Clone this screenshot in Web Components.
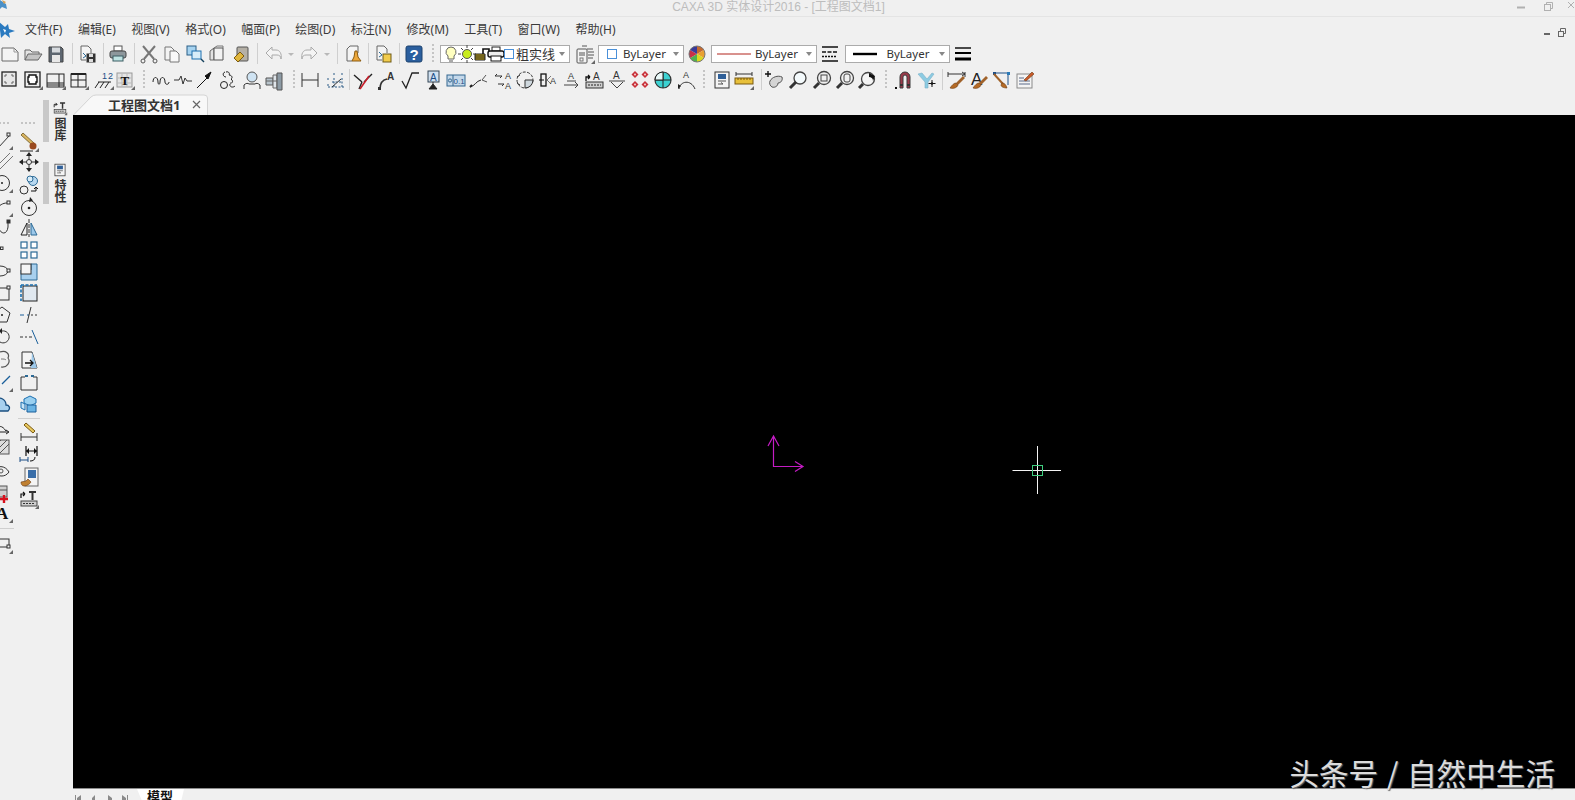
<!DOCTYPE html>
<html lang="zh">
<head>
<meta charset="utf-8">
<title>CAXA 3D 实体设计2016</title>
<style>
  html, body { margin: 0; height: 100%; overflow: hidden; background: #f0f0f0; }
  .lt { font-size: 13px; }
</style>
</head>
<body>
<cad-app>
  <title-bar>CAXA 3D 实体设计2016 - [工程图文档1]</title-bar>
  <menu-bar>
    <menu-item>文件(F)</menu-item><menu-item>编辑(E)</menu-item><menu-item>视图(V)</menu-item>
    <menu-item>格式(O)</menu-item><menu-item>幅面(P)</menu-item><menu-item>绘图(D)</menu-item>
    <menu-item>标注(N)</menu-item><menu-item>修改(M)</menu-item><menu-item>工具(T)</menu-item>
    <menu-item>窗口(W)</menu-item><menu-item>帮助(H)</menu-item>
  </menu-bar>

  <tool-row style="height:25px">
    <tool-icon name="new" at="10"></tool-icon><tool-icon name="open" at="33"></tool-icon><tool-icon name="save" at="56"></tool-icon>
    <tool-sep at="72"></tool-sep>
    <tool-icon name="saveas" at="87"></tool-icon>
    <tool-sep at="103"></tool-sep>
    <tool-icon name="print" at="118"></tool-icon>
    <tool-sep at="134"></tool-sep>
    <tool-icon name="cut" at="149"></tool-icon><tool-icon name="copy" at="172"></tool-icon><tool-icon name="copyblue" at="195"></tool-icon>
    <tool-icon name="cyl" at="217"></tool-icon><tool-icon name="cylpen" at="241"></tool-icon>
    <tool-sep at="257"></tool-sep>
    <tool-icon name="undo" at="274"></tool-icon><tool-icon name="drop" at="291"></tool-icon><tool-icon name="redo" at="309"></tool-icon><tool-icon name="drop" at="327"></tool-icon>
    <tool-sep at="337"></tool-sep>
    <tool-icon name="cone" at="353"></tool-icon>
    <tool-sep at="368"></tool-sep>
    <tool-icon name="pagebox" at="383"></tool-icon>
    <tool-sep at="399"></tool-sep>
    <tool-icon name="help" at="414"></tool-icon>
    <tool-grip at="433"></tool-grip>
    <line-combo w="130" at="505">
      <tool-icon name="bulb" at="10"></tool-icon><tool-icon name="sun" at="26"></tool-icon><tool-icon name="lock" at="41"></tool-icon>
      <tool-icon name="printsm" at="55"></tool-icon><tool-icon name="square" at="68"></tool-icon>
      <span class="lt" w="40" at="95">粗实线</span>
    </line-combo>
    <tool-icon name="layers" at="585"></tool-icon>
    <line-combo w="86" at="641">
      <tool-icon name="square" at="13"></tool-icon><span w="42" at="45">ByLayer</span>
    </line-combo>
    <tool-icon name="wheel" at="697"></tool-icon>
    <line-combo w="106" at="764">
      <tool-icon name="redline" at="22" w="34"></tool-icon><span w="42" at="64">ByLayer</span>
    </line-combo>
    <tool-icon name="dashes" at="831"></tool-icon>
    <line-combo w="105" at="897">
      <tool-icon name="blackline" at="19" w="24"></tool-icon><span w="42" at="62">ByLayer</span>
    </line-combo>
    <tool-icon name="weights" at="963"></tool-icon>
  </tool-row>

  <tool-row style="height:27px">
    <tool-icon name="frame" at="10"></tool-icon><tool-icon name="frame2" at="33"></tool-icon><tool-icon name="titleblk" at="56"></tool-icon>
    <tool-icon name="table" at="79"></tool-icon><tool-icon name="nums" at="104"></tool-icon><tool-icon name="tabletext" at="125"></tool-icon>
    <tool-grip at="144"></tool-grip>
    <tool-icon name="wave" at="161"></tool-icon><tool-icon name="pulse" at="183"></tool-icon><tool-icon name="leader" at="205"></tool-icon>
    <tool-icon name="cloud" at="228"></tool-icon><tool-icon name="person" at="252"></tool-icon><tool-icon name="shaft" at="275"></tool-icon>
    <tool-grip at="294"></tool-grip>
    <tool-icon name="dim" at="310"></tool-icon><tool-icon name="dimdots" at="335"></tool-icon>
    <tool-sep at="349"></tool-sep>
    <tool-icon name="trimy" at="363"></tool-icon><tool-icon name="arca" at="387"></tool-icon><tool-icon name="rough" at="410"></tool-icon>
    <tool-icon name="datum" at="433"></tool-icon><tool-icon name="tol" at="456"></tool-icon><tool-icon name="curve" at="479"></tool-icon>
    <tool-icon name="swap" at="503"></tool-icon><tool-icon name="circseg" at="525"></tool-icon><tool-icon name="boxa" at="548"></tool-icon>
    <tool-icon name="aarrow" at="572"></tool-icon><tool-icon name="exita" at="594"></tool-icon><tool-icon name="atri" at="617"></tool-icon>
    <tool-icon name="reddots" at="640"></tool-icon><tool-icon name="tealcirc" at="663"></tool-icon><tool-icon name="aarc" at="686"></tool-icon>
    <tool-grip at="704"></tool-grip>
    <tool-icon name="bluedoc" at="722"></tool-icon><tool-icon name="ruler" at="744"></tool-icon>
    <tool-sep at="761"></tool-sep>
    <tool-icon name="pan" at="774"></tool-icon><tool-icon name="zoom" at="798"></tool-icon><tool-icon name="zoomwin" at="822"></tool-icon>
    <tool-icon name="zoomall" at="845"></tool-icon><tool-icon name="zoomback" at="867"></tool-icon>
    <tool-grip at="886"></tool-grip>
    <tool-icon name="magnet" at="904"></tool-icon><tool-icon name="ysnap" at="927"></tool-icon>
    <tool-sep at="942"></tool-sep>
    <tool-icon name="dimbrush" at="957"></tool-icon><tool-icon name="abrush" at="980"></tool-icon><tool-icon name="nodebrush" at="1002"></tool-icon><tool-icon name="notepen" at="1025"></tool-icon>
  </tool-row>

  <work-area>
    <left-dock>
      <tool-row vertical base="93" style="width:22px;margin-left:-8px">
        <tool-grip across at="123"></tool-grip>
        <tool-icon name="l_line" at="140"></tool-icon><tool-icon name="l_dline" at="160"></tool-icon><tool-icon name="l_circle" at="183"></tool-icon>
        <tool-icon name="l_arc" at="207"></tool-icon><tool-icon name="l_hook" at="227"></tool-icon><tool-icon name="l_point" at="249"></tool-icon>
        <tool-icon name="l_ell" at="270"></tool-icon><tool-icon name="l_rect" at="293"></tool-icon><tool-icon name="l_poly" at="315"></tool-icon>
        <tool-icon name="l_undo" at="337"></tool-icon><tool-icon name="l_blob" at="360"></tool-icon><tool-icon name="l_dash" at="382"></tool-icon>
        <tool-icon name="l_cloud" at="404"></tool-icon><tool-icon name="l_arrow" at="430"></tool-icon><tool-icon name="l_hatch" at="448"></tool-icon>
        <tool-icon name="l_eye" at="470"></tool-icon><tool-icon name="l_plus" at="493"></tool-icon><tool-icon name="l_a" at="513"></tool-icon>
        <tool-sep across at="529"></tool-sep>
        <tool-icon name="l_small" at="545"></tool-icon>
      </tool-row>
      <tool-row vertical base="93" style="width:22px;margin-left:4px">
        <tool-grip across at="123"></tool-grip>
        <tool-icon name="brush" at="142"></tool-icon><tool-icon name="move" at="162"></tool-icon><tool-icon name="copycirc" at="185"></tool-icon>
        <tool-icon name="rotate" at="207"></tool-icon><tool-icon name="mirror" at="228"></tool-icon><tool-icon name="array" at="250"></tool-icon>
        <tool-icon name="scale" at="272"></tool-icon><tool-icon name="stretch" at="293"></tool-icon><tool-icon name="trim" at="315"></tool-icon>
        <tool-icon name="extend" at="337"></tool-icon><tool-icon name="docarrow" at="360"></tool-icon><tool-icon name="chamfer" at="382"></tool-icon>
        <tool-icon name="blocks" at="404"></tool-icon>
        <tool-sep across at="419"></tool-sep>
        <tool-icon name="dimpen" at="433"></tool-icon><tool-icon name="dimarrows" at="455"></tool-icon><tool-icon name="brushdoc" at="478"></tool-icon><tool-icon name="exit" at="500"></tool-icon>
      </tool-row>
      <dock-grips></dock-grips>
      <dock-tabs>
        <dock-tab icon="exit">图库</dock-tab>
        <dock-tab icon="bluedoc">特性</dock-tab>
      </dock-tabs>
    </left-dock>
    <doc-area>
      <doc-tabs>工程图文档1</doc-tabs>
      <draw-canvas>头条号 / 自然中生活</draw-canvas>
      <sheet-tabs>模型</sheet-tabs>
    </doc-area>
  </work-area>
</cad-app>

<script>
// 图标都画在 22x22 里,中心 11,11
const flyout = '<path d="M21 21h-4l4-4z" fill="#666" stroke="none"/>';
const paint = '<path d="M10 14l7-7 2 2-7 7z" fill="#a0622a" stroke="none"/><path d="M10 14c-2 0-4 2-6 5 3 1 7 0 8-3z" fill="#b56a24" stroke="#6b3a12" stroke-width=".6"/>';
const txt = (s, x, y, size, extra = '') =>
  `<text x="${x}" y="${y}" font-size="${size}" font-family="Liberation Sans" fill="#333" stroke="none" ${extra}>${s}</text>`;

const ICONS = {
  new: '<path d="M3 5h12l4 4v9H3z" fill="#f4f4f4" stroke="#6a6a6a"/><path d="M15 5v4h4" stroke="#999"/>',
  open: '<path d="M3 17V7h5l2 2h7v2" fill="#e4e4e4" stroke="#666"/><path d="M3 17l3-6h14l-4 6z" fill="#c4c4c4" stroke="#666"/>',
  save: '<path d="M4 4h12l2 2v13H4z" fill="#5d6670" stroke="#444"/><rect x="7" y="4.500" width="8" height="5" fill="#d6dade" stroke="none"/><rect x="7" y="12" width="8" height="7" fill="#e8e8e8" stroke="none"/>',
  saveas: '<path d="M10 17H5V3h7l3 3v4" fill="#f4f4f4" stroke="#666"/><path d="M7 10l3 3-3 2" stroke="#2c6a96"/><rect x="11" y="11" width="8" height="8" fill="#333" stroke="#333"/><rect x="13" y="11" width="4" height="3" fill="#ddd" stroke="none"/><rect x="13" y="16" width="4" height="3" fill="#ddd" stroke="none"/>',
  print: '<rect x="7" y="3" width="8" height="5" fill="#fff" stroke="#555"/><rect x="3" y="8" width="16" height="7" rx="2" fill="#8d979c" stroke="#444"/><rect x="6" y="13" width="10" height="5" fill="#bfe3e3" stroke="#3b5d62"/>',
  cut: '<path d="M5 3l11 13M17 3L6 16" stroke="#777" stroke-width="2"/><circle cx="5" cy="18" r="2" stroke="#555"/><circle cx="17" cy="18" r="2" stroke="#555"/>',
  copy: '<path d="M4 4h6l3 3v10H4z" fill="#f3f3f3" stroke="#777"/><path d="M9 8h6l3 3v8H9z" fill="#f8f8f8" stroke="#777"/>',
  copyblue: '<rect x="3" y="3" width="9" height="9" fill="#a6d3f0" stroke="#2b5f86"/><rect x="8" y="8" width="9" height="8" fill="#d8edf9" stroke="#1a6fb0"/><path d="M17 16l3 3" stroke="#16425e" stroke-width="1.400"/>',
  cyl: '<path d="M4 8l4-3v12H4z" fill="#e2e2e2" stroke="#666"/><path d="M8 5h9v12H8z" fill="#f2f2f2" stroke="#555"/><path d="M8 5l3-2h6v2" stroke="#777"/>',
  cylpen: '<rect x="7" y="4" width="11" height="14" rx="1" fill="#b5b0a6" stroke="#555"/><path d="M4 15l6-6 4 4-6 6z" fill="#e0b63c" stroke="#7a5a10"/>',
  undo: '<path d="M9 4L3 10l6 6v-4h5c2 0 4 1 4 4 1-5-1-9-5-9H9z" fill="#f4f4f4" stroke="#aaa"/>',
  redo: '<path d="M13 4l6 6-6 6v-4H8c-2 0-4 1-4 4-1-5 1-9 5-9h4z" fill="#f4f4f4" stroke="#aaa"/>',
  drop: '<path d="M8 10h6l-3 3z" fill="#b8b8b8" stroke="none"/>',
  cone: '<path d="M5 18V6l3-3h8v7" fill="#f4f4f4" stroke="#666"/><path d="M5 18h5" stroke="#666"/><path d="M10 18h9l-3-4-1-6h-2l-1 6z" fill="#eda83b" stroke="#8a5b10"/>',
  pagebox: '<path d="M10 17H5V3h7l3 3v4" fill="#f4f4f4" stroke="#666"/><path d="M7 9l3 3-3 2" stroke="#2c6a96"/><rect x="11" y="11" width="8" height="8" fill="#f2cc4c" stroke="#6e5a16"/>',
  help: `<rect x="3" y="3" width="16" height="16" rx="2" fill="#2b5f9e" stroke="#1d436f"/>${txt('?', 6.5, 17, 15, 'font-weight="bold" style="fill:#fff"')}`,
  bulb: '<path d="M11 4a5 5 0 0 1 3 9v3H8v-3a5 5 0 0 1 3-9z" fill="#ffffc0" stroke="#666"/><path d="M9 18h4" stroke="#555"/>',
  sun: '<circle cx="11" cy="11" r="4.500" fill="#c8ec1e" stroke="#555"/><path d="M11 2v3M11 17v3M2 11h3M17 11h3M5 5l2 2M15 15l2 2M5 17l2-2M15 7l2-2" stroke="#444"/>',
  lock: '<path d="M4 11h10v6H4z" fill="#c8a818" stroke="#222"/><path d="M4 13h10M4 15h10" stroke="#222"/><path d="M12 11V6h6v4" stroke="#111" stroke-width="1.600"/>',
  printsm: '<rect x="7" y="4" width="8" height="4" fill="#fff" stroke="#222"/><rect x="3" y="8" width="16" height="6" rx="2" fill="#eee" stroke="#111" stroke-width="1.400"/><rect x="6" y="13" width="10" height="5" fill="#fff" stroke="#111"/>',
  square: '<rect x="6.500" y="6.500" width="9" height="9" fill="#fff" stroke="#4a90d9"/>',
  layers: '<rect x="3" y="6" width="10" height="14" rx="1" fill="#f4f4f4" stroke="#555"/><path d="M5 10h6M5 12h6" stroke="#555"/><rect x="6" y="15" width="3" height="3" stroke="#777"/><path d="M8 3h5M13 6h6M14 9h6M14 12h6M14 15h5" stroke="#555"/>'+flyout,
  wheel: '<path d="M11 11L11 3A8 8 0 0 1 17.900 7z" fill="#c46a30" stroke="none"/><path d="M11 11L17.900 7A8 8 0 0 1 17.900 15z" fill="#e8a030" stroke="none"/><path d="M11 11L17.900 15A8 8 0 0 1 11 19z" fill="#d8d820" stroke="none"/><path d="M11 11L11 19A8 8 0 0 1 4.100 15z" fill="#50b050" stroke="none"/><path d="M11 11L4.100 15A8 8 0 0 1 4.100 7z" fill="#c83048" stroke="none"/><path d="M11 11L4.100 7A8 8 0 0 1 11 3z" fill="#3a3a9a" stroke="none"/><circle cx="11" cy="11" r="8" stroke="#777"/>',
  redline: '<path d="M0 11h34" stroke="#b2241c"/>',
  blackline: '<path d="M0 11h24" stroke="#000" stroke-width="2.400"/>',
  dashes: '<path d="M2 4h16M2 18h16" stroke="#111" stroke-width="1.600"/><path d="M2 9h4m1.500 0h4m1.500 0h4M2 13.500h2m1 0h2m1 0h2m1 0h2m1 0h2" stroke="#111" stroke-width="1.600"/>',
  weights: '<path d="M3 5h16" stroke="#000" stroke-width="1.400"/><path d="M3 10h16" stroke="#000" stroke-width="2"/><path d="M3 16h16" stroke="#000" stroke-width="3"/>',

  frame: '<rect x="3" y="3" width="14" height="14" fill="#e8e8e8" stroke="#222" stroke-width="1.300"/><path d="M6 6h2M6 6v2M14 6h-2M14 6v2M6 14h2M6 14v-2M14 14h-2M14 14v-2" stroke="#666"/>',
  frame2: '<rect x="3" y="3" width="15" height="15" fill="#eee" stroke="#222" stroke-width="1.300"/><path d="M7 6h7v2h1v5h-1v2H7v-2H6V8h1z" fill="#fff" stroke="#111" stroke-width="1.400"/>'+flyout,
  titleblk: '<rect x="2" y="5" width="17" height="13" stroke="#222"/><path d="M14 5v13M2 14h17M2 16h17" stroke="#222"/>'+flyout,
  table: '<rect x="3" y="5" width="15" height="13" stroke="#222"/><path d="M3 5h15" stroke="#222" stroke-width="2"/><path d="M10 5v13M3 11h15" stroke="#222"/>'+flyout,
  nums: txt('1', 9, 10, 9, 'style="fill:#1c4e86"')+txt('2', 15, 10, 9, 'style="fill:#1c4e86"')+'<path d="M2 19l4-6M7 19l4-6M12 19l4-6M5 13h13" stroke="#222"/>'+flyout,
  tabletext: '<rect x="3" y="4" width="15" height="14" fill="#e4e4e4" stroke="#999"/><path d="M3 9h15M3 14h15M8 4v14M13 4v14" stroke="#bbb"/>'+txt('T', 6.5, 16, 13, 'font-weight="bold" style="fill:#111;font-family:Liberation Serif"')+flyout,
  wave: '<path d="M3 13c0-6 5-6 5 0 0 3 2 3 2 0 0-6 5-6 5 0 0 3 4 3 4 0" stroke="#222"/>',
  pulse: '<path d="M2 11h5l2-4 2 8 2-6 2 3h5" stroke="#333"/>',
  leader: '<path d="M3 19L13 9" stroke="#111"/><path d="M11 7l6-4-3 7z" fill="#111" stroke="#111"/>',
  cloud: '<path d="M9 3c3-1 4 2 3 3 3 0 4 3 2 4 3 2 1 5-1 4" stroke="#222"/><circle cx="7" cy="16" r="3.500" stroke="#222"/><path d="M8 3C5 4 6 8 9 8" stroke="#222"/><path d="M13 15c-1 3 3 4 5 2" stroke="#222"/>',
  person: '<circle cx="11" cy="8" r="5" fill="#cfe3f2" stroke="#555"/><path d="M3 20v-4c2-2 4-2 5-1h6c1-1 3-1 5 1v4" stroke="#333"/>',
  shaft: '<path d="M2 9h7v7H2z" fill="#b8c4cc" stroke="#555"/><path d="M9 6h4v13H9z" fill="#dfe5ea" stroke="#666"/><path d="M13 4h5v17h-5z" fill="#8c9aa4" stroke="#555"/><path d="M2 12h11" stroke="#666"/>',
  dim: '<path d="M3 4v14M19 4v14M3 11h16" stroke="#333"/>',
  dimdots: '<path d="M10 4v3M18 4v3M4 9v3M4 15v3M10 9v9M18 9v9M4 18h16M8 13h10" stroke="#2a5a86" stroke-dasharray="2 1.500"/><path d="M8 18l9-8" stroke="#333"/>',
  trimy: '<path d="M2 6l8 7M20 5l-8 8" stroke="#222" stroke-width="1.400"/><path d="M10 13l-3 7" stroke="#222" stroke-width="1.400"/><path d="M17 7L8 20" stroke="#c81e2a" stroke-width="1.600"/>',
  arca: '<path d="M4 20c0-6 2-9 7-10" stroke="#333" stroke-width="1.600"/><path d="M2 18h3v3H2z" fill="#333" stroke="none"/>'+txt('A', 11, 11, 10, 'font-weight="bold"'),
  rough: '<path d="M3 12l4 7L13 4h7" stroke="#222" stroke-width="1.300"/>',
  datum: '<rect x="6" y="2" width="11" height="11" fill="#cfe0f0" stroke="#345"/>'+txt('A', 8, 11.5, 10, 'style="fill:#1c4e86"')+'<path d="M11 13v2" stroke="#333"/><path d="M7 20l4-5 4 5z" fill="#222" stroke="#222"/>',
  tol: '<rect x="2" y="6" width="18" height="11" fill="#c4d8ea" stroke="#33668f"/><path d="M8 6v11" stroke="#33668f"/>'+txt('0.1', 8.5, 15, 8, 'style="fill:#1c4e86"')+'<circle cx="5" cy="11.500" r="1.600" stroke="#33668f"/>',
  curve: '<path d="M2 18c5-1 6-6 11-7" stroke="#222"/><path d="M2 18l2-2" stroke="#222" stroke-width="2"/><path d="M18 6l-4 5 5 2" stroke="#555"/>',
  swap: '<path d="M3 7h7M3 7l2-2M6 15h6M12 15l-2 2M10 7L8 9" stroke="#333"/>'+txt('A', 13, 10, 9)+txt('A', 13, 20, 9),
  circseg: '<circle cx="11" cy="11" r="8" stroke="#333" stroke-dasharray="3 1.400"/><path d="M11 11h8a8 8 0 0 1-8 8z" fill="#cfd8de" stroke="#333"/><path d="M3 8l3-2M3 14l3 2" stroke="#333"/>',
  boxa: '<rect x="4" y="5" width="5" height="12" stroke="#111" stroke-width="1.300"/><path d="M2 11h5" stroke="#111"/><path d="M14 7l-4 4 4 4" stroke="#777"/>'+txt('A', 13, 15, 9),
  aarrow: txt('A', 7, 10, 9)+'<path d="M6 12h9M3 16h14M14 13l3 3-3 3" stroke="#444"/>',
  exita: '<path d="M3 12V8h4M7 8L5 6M7 8L5 10" stroke="#111" stroke-width="1.300"/>'+txt('A', 10, 11, 10)+'<rect x="3" y="13" width="17" height="6" fill="#cfcfcf" stroke="#333"/><path d="M5 16h13" stroke="#222" stroke-dasharray="2 1"/>',
  atri: txt('A', 7, 10, 10)+'<path d="M3 12h16" stroke="#444"/><path d="M5 13l6 6 6-6" stroke="#444"/>',
  reddots: '<g fill="#c8323a" stroke="none"><path d="M6 2l3.500 3.500L6 9 2.500 5.500z"/><path d="M16 2l3.500 3.500L16 9l-3.500-3.500z"/><path d="M6 12l3.500 3.500L6 19l-3.500-3.500z"/><path d="M16 12l3.500 3.500L16 19l-3.500-3.500z"/></g><g fill="#f4d4d4" stroke="none"><circle cx="6" cy="5.500" r="1"/><circle cx="16" cy="5.500" r="1"/><circle cx="6" cy="15.500" r="1"/><circle cx="16" cy="15.500" r="1"/></g>',
  tealcirc: '<circle cx="11" cy="11" r="8" fill="#3cd2d2" stroke="#333" stroke-width="1.200"/><path d="M11 3v16M3 11h16" stroke="#222"/><path d="M11 3a8 8 0 0 0-8 8h8z" fill="#e8f8f8" stroke="#222"/>',
  aarc: txt('A', 8, 9, 9)+'<path d="M4 20c1-8 12-10 16 0" stroke="#333"/><path d="M3 15l3 2-3 3z" fill="#222" stroke="none"/>',
  bluedoc: '<rect x="4" y="3" width="14" height="16" fill="#f4f4f4" stroke="#333"/><rect x="7" y="5" width="8" height="5" fill="#2f5f98" stroke="none"/><path d="M7 12h8M7 15h5l-2-1.500" stroke="#555"/>',
  ruler: '<path d="M3 3v4M19 3v4M3 5h16" stroke="#333"/><rect x="2" y="9" width="18" height="6" fill="#e8c03a" stroke="#7a5a10"/><path d="M5 9v2M8 9v2M11 9v2M14 9v2M17 9v2" stroke="#7a5a10"/>'+flyout,
  pan: '<path d="M5 2v6M2 5h6" stroke="#111" stroke-width="1.400"/><path d="M7 12c2-4 8-6 12-4 1 3-1 6-4 6 0 3-3 5-6 4-2-1-3-4-2-6z" fill="#d4d4d4" stroke="#555"/>',
  zoom: '<circle cx="13" cy="9" r="6" fill="#f4fafc" stroke="#444" stroke-width="1.300"/><path d="M9 13l-6 6" stroke="#333" stroke-width="3"/>',
  zoomwin: '<circle cx="13" cy="9" r="6.500" fill="#f0f0f0" stroke="#444" stroke-width="1.300"/><rect x="10" y="6" width="6" height="6" stroke="#444"/><path d="M8 14l-5 5" stroke="#333" stroke-width="3"/>',
  zoomall: '<circle cx="13" cy="9" r="6.500" fill="#f0f0f0" stroke="#444" stroke-width="1.300"/><rect x="10" y="5" width="6" height="8" rx="2" stroke="#444"/><path d="M8 14l-5 5" stroke="#333" stroke-width="3"/>',
  zoomback: '<circle cx="12" cy="10" r="6.500" fill="#f4f4f4" stroke="#444" stroke-width="1.300"/><path d="M7 15l-4 4" stroke="#333" stroke-width="3"/><path d="M13 4l6 3-2 5c0-3-2-4-4-4z" fill="#111" stroke="none"/>',
  magnet: '<path d="M7 19V8a5 5 0 0 1 10 0v11h-3V8a2 2 0 0 0-4 0v11z" fill="#9a3a4a" stroke="#3a3a3a"/><path d="M7 16h3M14 16h3" stroke="#333" stroke-width="2"/><path d="M2 18h2v2H2z" fill="#111" stroke="none"/>',
  ysnap: '<path d="M2 5l4-1 5 6 5-6 2 1-6 8v6h-3v-6z" fill="#8ccbe2" stroke="#7ab0c8" stroke-width=".6"/><path d="M16 11v7M12.500 14.500h7" stroke="#111"/><circle cx="16" cy="14.500" r="1.200" fill="#111"/>',
  dimbrush: '<path d="M2 3v5M19 3v5M2 5h17M16 3l3 2-3 2" stroke="#333"/>'+paint,
  abrush: txt('A', 2, 16, 17, 'style="fill:#222"')+paint,
  nodebrush: '<path d="M3 4h14v12" stroke="#1c4e86"/><rect x="2" y="3" width="3" height="3" fill="#1c4e86" stroke="none"/><rect x="16" y="3" width="3" height="3" fill="#2a7ab8" stroke="none"/><path d="M3 5l9 10" stroke="#a0622a" stroke-width="2"/><path d="M11 14c3 0 4 2 5 5-3 0-6-1-6-3z" fill="#b56a24" stroke="#6b3a12" stroke-width=".6"/>',
  notepen: '<rect x="3" y="5" width="15" height="14" fill="#f4f4f4" stroke="#8a8a8a"/><path d="M5 9h5M5 12h11M5 15h11" stroke="#5a6a8a"/><path d="M10 11l8-8 2 2-8 7z" fill="#c85a2a" stroke="#6b3a12" stroke-width=".6"/>',

  brush: '<path d="M3 3l11 10 2-2L5 1z" fill="#d8b460" stroke="#6b5520" stroke-width=".8" transform="translate(0 1)"/><circle cx="15" cy="15" r="3.500" fill="#9a4a20"/><path d="M2 20h13" stroke="#222"/>'+flyout,
  move: '<path d="M11 2v18M2 11h18" stroke="#333"/><path d="M11 1l3 4H8zM11 21l3-4H8zM1 11l4-3v6zM21 11l-4-3v6z" fill="#222" stroke="none"/><circle cx="11" cy="11" r="2.500" fill="#f0f0f0" stroke="#333"/>',
  copycirc: '<circle cx="15" cy="7" r="4.500" fill="#b8d8f0" stroke="#2c6a96"/><circle cx="12" cy="5" r="3" fill="#d8ecf8" stroke="#2c6a96"/><circle cx="6" cy="16" r="4" stroke="#333"/><path d="M13 17h5v-3M16 15l2-2 2 2" stroke="#111"/>',
  rotate: '<circle cx="11" cy="12" r="7.500" stroke="#333"/><circle cx="11" cy="12" r="1.300" fill="#222"/><path d="M12 1l3 3.500-4 1.500z" fill="#222" stroke="none"/>',
  mirror: '<path d="M11 2v18" stroke="#333" stroke-dasharray="4 1"/><path d="M9 6L3 18h6z" stroke="#222"/><path d="M13 6l6 12h-6z" fill="#9cc8ea" stroke="#2c6a96"/>',
  array: '<g fill="#fff" stroke="#2c6a96" stroke-width="1.200"><rect x="3" y="3" width="6" height="6"/><rect x="13" y="3" width="6" height="6"/><rect x="3" y="13" width="6" height="6"/><rect x="13" y="13" width="6" height="6"/></g>',
  scale: '<path d="M3 9h10V3h6v16H3z" fill="#a8d0ee" stroke="#2c6a96"/><rect x="3" y="3" width="10" height="10" fill="#f4f4f4" stroke="#333"/>',
  stretch: '<rect x="5" y="4" width="14" height="15" fill="#e0e8f0" stroke="#222"/><path d="M3 3v16M3 3h16" stroke="#1a6fb0" stroke-width="1.600" stroke-dasharray="3 1.500"/>',
  trim: '<path d="M2 11h4M9 11h2" stroke="#1a5f9a"/><path d="M13 11h2M17 11h3" stroke="#333" stroke-dasharray="2 1"/><path d="M13 3L9 19" stroke="#333"/>',
  extend: '<path d="M2 11h3M7 11h2M11 11h3" stroke="#333"/><path d="M14 4l6 14" stroke="#1a5f9a"/>',
  docarrow: '<path d="M4 3h10l5 16H4z" fill="#f4f4f4" stroke="#333"/><path d="M14 3l5 16h-6z" fill="#9cc8ea" stroke="none"/><path d="M7 14h8M12 11l3 3-3 3" stroke="#111" stroke-width="1.300"/>',
  chamfer: '<path d="M3 6h4M15 6h4M3 6v13h16V6" stroke="#333"/><path d="M7 5h3M13 5h3" stroke="#2c6a96" stroke-width="2"/>',
  blocks: '<path d="M6 6l6-3 6 3v4l-6 3-6-3z" fill="#9ad0f0" stroke="#1a6fb0"/><path d="M3 9l4 2v6l-4-2z" fill="#c8e4f6" stroke="#1a6fb0"/><path d="M9 12h9v7H9z" fill="#6ab4e4" stroke="#1a5f9a"/>',
  dimpen: '<path d="M3 12v8M19 12v8M3 16h16" stroke="#333"/><path d="M8 2l9 8-2 2-9-8z" fill="#e8c860" stroke="#7a5a10"/>',
  dimarrows: '<path d="M8 3v10M19 3v10M8 8h11" stroke="#111" stroke-width="1.200"/><path d="M8 8l3-3v6zM19 8l-3-3v6z" fill="#111" stroke="none"/><path d="M2 14v5M10 14v5M2 17h8" stroke="#1c4e86"/><path d="M12 18c3 0 5-1 5-4" stroke="#111"/>',
  brushdoc: '<rect x="7" y="2" width="13" height="18" fill="#f4f4f4" stroke="#666"/><rect x="10" y="4" width="8" height="8" fill="#3a6ea8" stroke="none"/><path d="M8 15l-5 1c0 2 1 4 3 4 3 0 6-2 7-4l-3-3z" fill="#c08030" stroke="#6b3a12" stroke-width=".6"/>',
  exit: '<path d="M3 10V6h4M7 6L5 4M7 6L5 8" stroke="#111" stroke-width="1.200"/><path d="M11 4h7M14.500 4v8" stroke="#333" stroke-width="2"/><rect x="3" y="13" width="16" height="5" fill="#cfcfcf" stroke="#444"/><path d="M5 15.500h12" stroke="#333" stroke-dasharray="2 1"/>'+flyout,

  l_line: '<path d="M6 19L17 7" stroke="#333"/><rect x="15" y="4" width="3" height="3" stroke="#333"/>'+flyout,
  l_dline: '<path d="M5 17L18 4M8 20L21 7" stroke="#777"/>',
  l_circle: '<circle cx="10" cy="11" r="7.500" stroke="#333"/><circle cx="10" cy="11" r="1" fill="#222"/>'+flyout,
  l_arc: '<path d="M4 14c3-5 7-7 11-7" stroke="#333"/><rect x="15" y="5" width="3" height="3" stroke="#333"/>'+flyout,
  l_hook: '<path d="M6 11c3 8 9 8 10 0V7" stroke="#333"/><rect x="15" y="4" width="3" height="3" fill="#333" stroke="#333"/>',
  l_point: '<rect x="8.500" y="9" width="2.500" height="2.500" stroke="#333"/>',
  l_ell: '<ellipse cx="8" cy="12" rx="8" ry="5" stroke="#333"/><rect x="15" y="10" width="3" height="3" fill="#f0f0f0" stroke="#333"/>',
  l_rect: '<rect x="2" y="6" width="15" height="12" stroke="#333"/><rect x="15" y="4" width="3" height="3" fill="#f0f0f0" stroke="#333"/>',
  l_poly: '<path d="M10 3l8 6-3 9H5L2 9z" stroke="#333"/><circle cx="10" cy="11" r="1" fill="#222"/>',
  l_undo: '<path d="M10 5a6 6 0 1 1-2 11" stroke="#333"/><path d="M10 2v6l-3-3z" fill="#222" stroke="none"/>',
  l_blob: '<path d="M8 3c6-2 10 2 8 6 3 4-1 10-7 9" stroke="#555" stroke-width="1.200"/><path d="M9 10c3 0 4 0 5 1" stroke="#777"/>',
  l_dash: '<path d="M5 18l2-2M10 13l8-8" stroke="#1a5f9a" stroke-width="1.300"/>'+flyout,
  l_cloud: '<path d="M2 18h14c3-3 1-6-2-6 0-6-6-8-9-6" fill="#a8d0ee" stroke="#1a4f80" stroke-width="1.300"/>',
  l_arrow: '<path d="M4 12c2-6 6-6 10 0M2 13h14M14 11l3 2-3 2" stroke="#222"/>',
  l_hatch: '<rect x="3" y="3" width="14" height="14" fill="#ddd" stroke="#555"/><path d="M3 9l6-6M3 15L15 3M7 17L17 7" stroke="#555"/>',
  l_eye: '<path d="M1 12c4-6 12-6 16 1-4 6-12 5-16-1z" stroke="#333"/><circle cx="9" cy="12" r="2" stroke="#555"/>',
  l_plus: '<rect x="2" y="4" width="13" height="11" fill="#cfcfcf" stroke="#555"/><path d="M2 8h13" stroke="#555"/><path d="M12 13v8M8 17h8" stroke="#d8101c" stroke-width="2.400"/>',
  l_a: txt('A', 4, 17, 17, 'font-weight="bold" style="fill:#111;font-family:Liberation Serif"')+flyout,
  l_small: '<rect x="4" y="6" width="13" height="8" stroke="#333"/><rect x="15" y="12" width="3" height="3" fill="#f0f0f0" stroke="#333"/>'+flyout,
};

// 按子元素的 at(中心坐标)算出 margin,位置还是走 flex 流
function flowChildren(host, vertical, base) {
  let cur = base;
  for (const child of host.children) {
    if (!child.hasAttribute('at')) continue;
    const size = child.hasAttribute('across') ? 2 : +(child.getAttribute('w') || child.defaultSize || 22);
    const center = +child.getAttribute('at');
    child.style[vertical ? 'marginTop' : 'marginLeft'] = (center - size / 2 - cur) + 'px';
    cur = center + size / 2;
  }
}

class CadApp extends HTMLElement {
  constructor() {
    super();
    this.attachShadow({ mode: 'open' });
    this.shadowRoot.innerHTML = `
    <style>
      :host { display: flex; flex-direction: column; width: 1575px; height: 800px; overflow: hidden;
        background: #f0f0f0; font-family: "Noto Sans", "Noto Sans CJK SC", sans-serif; font-size: 12px; color: #333; }
    </style>
    <slot></slot>`;
  }
}

class TitleBar extends HTMLElement {
  constructor() {
    super();
    this.attachShadow({ mode: 'open' });
    this.shadowRoot.innerHTML = `
    <style>
      :host { display: flex; align-items: flex-start; justify-content: center; box-sizing: border-box; height: 17px;
        padding-right: 18px; position: relative; border-bottom: 1px solid #e4e4e4; color: #bdbdbd; line-height: 14px;
        font-family: "Liberation Sans", "Noto Sans CJK SC", sans-serif; }
      .logo { position: absolute; left: 0; top: 0; }
      .btns { position: absolute; left: 1511px; top: 0; }
    </style>
    <svg class="logo" width="9" height="10"><path d="M0 0l6 4 1 5-5-2-2 2z" fill="#4a90c8"/><path d="M2 0l4 2-2 2z" fill="#d8a050"/></svg>
    <slot></slot>
    <svg class="btns" width="64" height="14" fill="none" stroke="#b0b0b0">
      <path d="M6 7.500h8" stroke-width="2"/>
      <rect x="33.500" y="4.500" width="6" height="6"/><path d="M35.500 4.500v-2h6v6h-2"/>
      <path d="M57 2l6 6M63 2l-6 6"/>
    </svg>`;
  }
}

class MenuBar extends HTMLElement {
  constructor() {
    super();
    this.attachShadow({ mode: 'open' });
    this.shadowRoot.innerHTML = `
    <style>
      :host { display: flex; align-items: center; gap: 15.500px; box-sizing: border-box; height: 24px; padding-left: 25px; position: relative; }
      .logo { position: absolute; left: 0; top: 3px; }
      .btns { position: absolute; left: 1541px; top: 9px; }
    </style>
    <svg class="logo" width="15" height="19" fill="none"><path d="M-1 2l6 5 3-3 1 5 6 2-6 2 1 5-5-4-4 4z" fill="#2a7ac0"/><path d="M3 9l3 1-1 3z" fill="#fff"/></svg>
    <slot></slot>
    <svg class="btns" width="32" height="14" fill="none" stroke="#666">
      <path d="M3 8h6" stroke-width="2"/>
      <rect x="17.500" y="5.500" width="5" height="5"/><path d="M19.500 5.500v-3h5v5h-2"/>
    </svg>`;
  }
}

class MenuItem extends HTMLElement {
  constructor() {
    super();
    this.attachShadow({ mode: 'open' });
    this.shadowRoot.innerHTML = `<style>:host { display: block; white-space: nowrap; color: #3a3a3a; }</style><slot></slot>`;
  }
}

class ToolRow extends HTMLElement {
  constructor() {
    super();
    this.attachShadow({ mode: 'open' });
    this.shadowRoot.innerHTML = `
    <style>
      :host { display: flex; align-items: center; flex: none; }
      :host([vertical]) { flex-direction: column; }
    </style>
    <slot></slot>`;
  }
  connectedCallback() {
    flowChildren(this, this.hasAttribute('vertical'), +(this.getAttribute('base') || 0));
  }
}

class ToolIcon extends HTMLElement {
  constructor() {
    super();
    this.attachShadow({ mode: 'open' });
  }
  connectedCallback() {
    const w = +(this.getAttribute('w') || 22);
    this.shadowRoot.innerHTML = `
    <style>
      :host { display: block; flex: none; width: ${w}px; height: 22px; }
      svg { display: block; overflow: hidden; }
      text { stroke: none; }
    </style>
    <svg width="${w}" height="22" viewBox="0 0 ${w} 22" fill="none">${ICONS[this.getAttribute('name')] || ''}</svg>`;
  }
}

class ToolSep extends HTMLElement {
  constructor() {
    super();
    this.attachShadow({ mode: 'open' });
    this.shadowRoot.innerHTML = `
    <style>
      :host { display: block; flex: none; width: 1px; height: 21px; background: #cfcfcf; }
      :host([across]) { width: 22px; height: 1px; }
    </style>`;
  }
  get defaultSize() { return 1; }
}

class ToolGrip extends HTMLElement {
  constructor() {
    super();
    this.attachShadow({ mode: 'open' });
    this.shadowRoot.innerHTML = `
    <style>
      :host { display: block; flex: none; width: 2px; height: 20px;
        background: repeating-linear-gradient(#c4c4c4 0 2px, transparent 2px 4px); }
      :host([across]) { width: 16px; height: 2px;
        background: repeating-linear-gradient(90deg, #c4c4c4 0 2px, transparent 2px 4px); }
    </style>`;
  }
  get defaultSize() { return 2; }
}

class LineCombo extends HTMLElement {
  constructor() {
    super();
    this.attachShadow({ mode: 'open' });
    this.shadowRoot.innerHTML = `
    <style>
      :host { display: flex; align-items: center; flex: none; box-sizing: border-box; height: 18px;
        background: #fff; border: 1px solid #ababab; color: #333; white-space: nowrap; font-size: 11.500px; }
      ::slotted(span) { flex: none; line-height: 16px; }
      .arrow { margin-left: auto; margin-right: 4px; width: 0; height: 0; flex: none;
        border: 3px solid transparent; border-top: 4px solid #888; border-bottom: 0; }
    </style>
    <slot></slot><div class="arrow"></div>`;
  }
  connectedCallback() {
    this.style.width = this.getAttribute('w') + 'px';
    flowChildren(this, false, 0);
  }
}

class WorkArea extends HTMLElement {
  constructor() {
    super();
    this.attachShadow({ mode: 'open' });
    this.shadowRoot.innerHTML = `<style>:host { display: flex; flex: 1; min-height: 0; }</style><slot></slot>`;
  }
}

class LeftDock extends HTMLElement {
  constructor() {
    super();
    this.attachShadow({ mode: 'open' });
    this.shadowRoot.innerHTML = `<style>:host { display: flex; flex: none; width: 73px; }</style><slot></slot>`;
  }
}

class DockGrips extends HTMLElement {
  constructor() {
    super();
    this.attachShadow({ mode: 'open' });
    this.shadowRoot.innerHTML = `
    <style>
      :host { display: flex; flex-direction: column; gap: 20px; flex: none; width: 6px; margin: 7px 0 0 3px; }
      div { background: #c8c8c8; height: 42px; }
    </style>
    <div></div><div></div>`;
  }
}

class DockTabs extends HTMLElement {
  constructor() {
    super();
    this.attachShadow({ mode: 'open' });
    this.shadowRoot.innerHTML = `
    <style>:host { display: flex; flex-direction: column; gap: 20px; margin: 7px 0 0 3px; width: 15px; }</style>
    <slot></slot>`;
  }
}

class DockTab extends HTMLElement {
  constructor() {
    super();
    this.attachShadow({ mode: 'open' });
  }
  connectedCallback() {
    this.shadowRoot.innerHTML = `
    <style>
      :host { display: flex; flex-direction: column; align-items: center; height: 42px; }
      svg { flex: none; display: block; }
      .label { writing-mode: vertical-rl; text-orientation: upright; font-size: 12px; line-height: 15px;
        font-weight: 700; color: #333; margin-top: 1px; }
    </style>
    <svg width="16" height="16" viewBox="0 0 22 22" fill="none">${ICONS[this.getAttribute('icon')]}</svg>
    <div class="label"><slot></slot></div>`;
  }
}

class DocArea extends HTMLElement {
  constructor() {
    super();
    this.attachShadow({ mode: 'open' });
    this.shadowRoot.innerHTML = `<style>:host { display: flex; flex-direction: column; flex: 1; min-width: 0; }</style><slot></slot>`;
  }
}

class DocTabs extends HTMLElement {
  constructor() {
    super();
    this.attachShadow({ mode: 'open' });
    this.shadowRoot.innerHTML = `
    <style>
      :host { display: block; flex: none; height: 22px; }
      .tab { position: relative; isolation: isolate; display: flex; align-items: center; width: 135px; height: 22px; box-sizing: border-box;
        padding: 0 0 0 35px; font-size: 13px; font-weight: 700; color: #333; white-space: nowrap; }
      .tab svg.bg { position: absolute; left: 0; top: 0; z-index: -1; }
      .x { margin-left: auto; margin-right: 7px; display: block; }
    </style>
    <div class="tab">
      <svg class="bg" width="135" height="22"><path d="M0.500 22L18 4Q20 2 23 2H131Q134.500 2 134.500 5V22" fill="#f8f8f8" stroke="#d4d4d4"/></svg>
      <slot></slot>
      <svg class="x" width="9" height="9" fill="none" stroke="#666" stroke-width="1.200"><path d="M1 1l7 7M8 1l-7 7"/></svg>
    </div>`;
  }
}

class DrawCanvas extends HTMLElement {
  constructor() {
    super();
    this.attachShadow({ mode: 'open' });
    this.shadowRoot.innerHTML = `
    <style>
      :host { display: block; flex: 1; min-height: 0; position: relative; background: #000; }
      svg { position: absolute; left: 0; top: 0; }
      .mark { position: absolute; right: 20px; bottom: -3px; font-family: "Noto Sans CJK SC", sans-serif; font-size: 29.600px;
        word-spacing: 2px; line-height: 36px; color: #dcdcdc; white-space: nowrap; text-shadow: 1px 1px 1px #666; }
    </style>
    <svg width="1502" height="673" fill="none">
      <g stroke="#c41cc4" stroke-width="1.200" transform="translate(-73 -115)">
        <path d="M773.500 467V436M768 446l5.500-10 5.500 10"/>
        <path d="M773.500 466.500H803M795 461.500l8 5-8 5"/>
      </g>
      <g transform="translate(-73 -115)">
        <path d="M1012.500 470.500H1061M1037.500 446V494" stroke="#f4f4f4"/>
        <rect x="1032.500" y="465.500" width="10" height="10" stroke="#3fcf7f"/>
      </g>
    </svg>
    <div class="mark"><slot></slot></div>`;
  }
}

class SheetTabs extends HTMLElement {
  constructor() {
    super();
    this.attachShadow({ mode: 'open' });
    this.shadowRoot.innerHTML = `
    <style>
      :host { display: flex; flex: none; height: 12px; box-sizing: border-box; border-top: 1px solid #8c8c8c; overflow: hidden; }
      .nav { display: block; flex: none; }
      .tab { position: relative; flex: none; width: 47px; margin-left: 4px; height: 20px; box-sizing: border-box;
        padding-left: 10px; font-size: 13px; line-height: 15px; font-weight: 700; color: #111;
        background: #fff; clip-path: polygon(0 0, 100% 0, 90% 100%, 18% 100%); }
    </style>
    <svg class="nav" width="60" height="11" fill="#8a8a8a">
      <path d="M2 6h1v5H2zM8 6l-4 3v2h4zM22 6l-3 3v2h3zM35 6l4 3v2h-4zM49 6l4 3v2h-4zM54 6h1v5h-1z"/>
    </svg>
    <div class="tab"><slot></slot></div>`;
  }
}

customElements.define('cad-app', CadApp);
customElements.define('title-bar', TitleBar);
customElements.define('menu-bar', MenuBar);
customElements.define('menu-item', MenuItem);
customElements.define('tool-icon', ToolIcon);
customElements.define('tool-sep', ToolSep);
customElements.define('tool-grip', ToolGrip);
customElements.define('line-combo', LineCombo);
customElements.define('tool-row', ToolRow);
customElements.define('work-area', WorkArea);
customElements.define('left-dock', LeftDock);
customElements.define('dock-grips', DockGrips);
customElements.define('dock-tabs', DockTabs);
customElements.define('dock-tab', DockTab);
customElements.define('doc-area', DocArea);
customElements.define('doc-tabs', DocTabs);
customElements.define('draw-canvas', DrawCanvas);
customElements.define('sheet-tabs', SheetTabs);
</script>
</body>
</html>
